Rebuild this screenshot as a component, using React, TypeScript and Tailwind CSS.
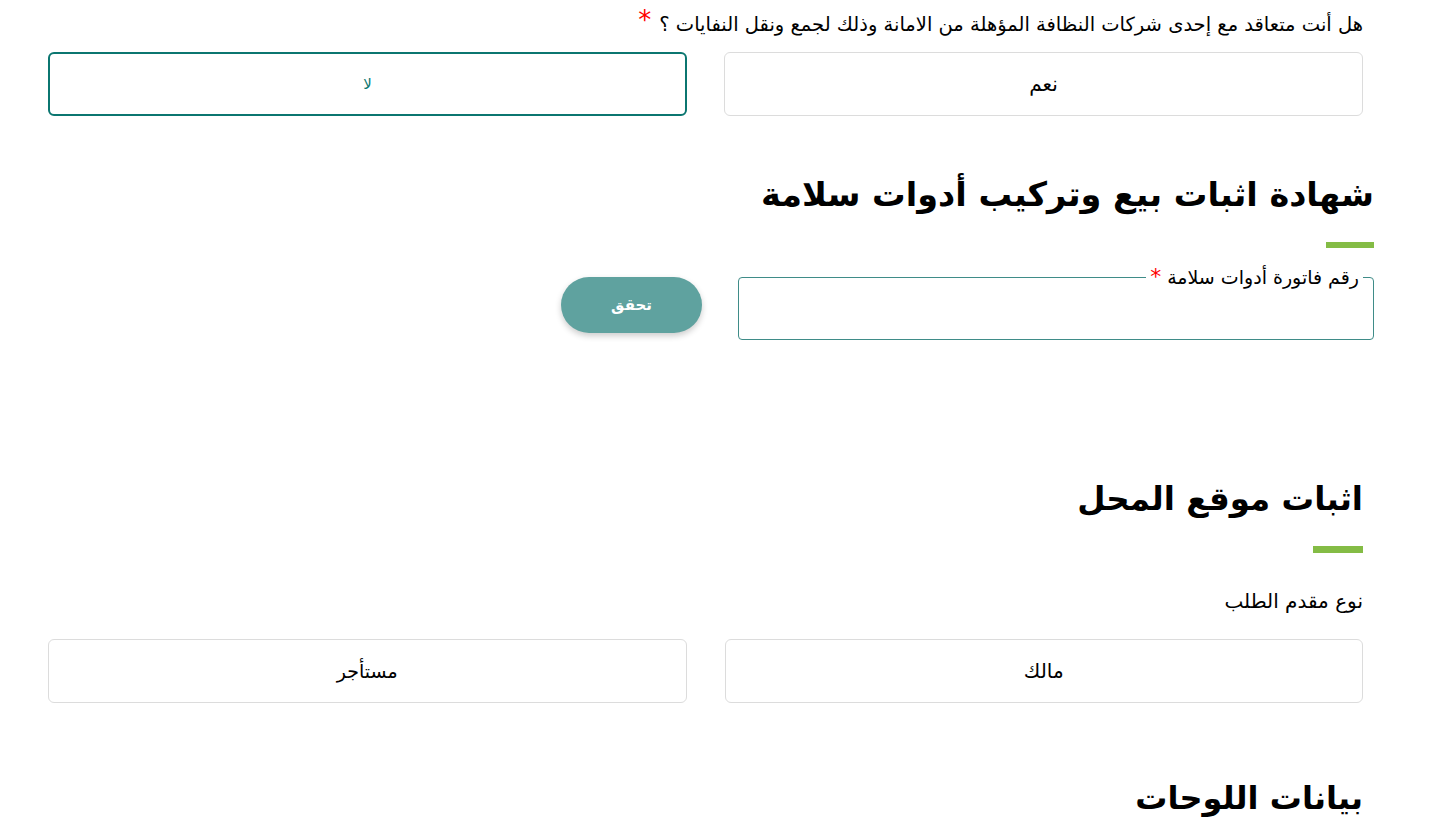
import React from "react";

export default function App() {
  return (
    <div
      dir="rtl"
      className="w-[1444px] h-[840px] overflow-hidden bg-white text-black"
      style={{ fontFamily: '"DejaVu Sans", "Noto Sans", sans-serif' }}
    >
      {/* Section 1 */}
      <div className="pr-[81px] pl-[48px] pt-[10px]">
        <div className="flex items-start gap-[8px] text-[19.5px] leading-[30px]">
          <span>هل أنت متعاقد مع إحدى شركات النظافة المؤهلة من الامانة وذلك لجمع ونقل النفايات ؟</span>
          <span className="text-[#ff0000] text-[26px] leading-[20px]">*</span>
        </div>
        <div className="grid grid-cols-2 gap-[37px] mt-[12px]">
          <button className="h-[64px] rounded-[6px] border border-[#dcdcdc] bg-white text-[20px]">نعم</button>
          <button className="h-[64px] rounded-[6px] border-2 border-[#0b7670] bg-white text-[15px] text-[#0b7670]">لا</button>
        </div>
      </div>

      {/* Section 2 */}
      <div className="pr-[70px] mt-[54px]">
        <h2 className="text-[33.5px] font-bold leading-[50px]">شهادة اثبات بيع وتركيب أدوات سلامة</h2>
        <div className="w-[48px] h-[6px] bg-[#84bc45] mt-[22px]" />
        <div className="flex items-start gap-[36px] mt-[29px]">
          <div className="relative w-[636px] h-[63px] rounded-[4px] border border-[#3f8c88]">
            <label className="absolute -top-[12px] right-[10px] bg-white px-[4px] text-[19px] leading-[22px] flex items-center gap-[6px]">
              <span>رقم فاتورة أدوات سلامة</span>
              <span className="text-[#ff0000] text-[22px] leading-[16px]">*</span>
            </label>
          </div>
          <button className="w-[141px] h-[56px] rounded-full bg-[#5fa29f] text-white font-bold text-[15px] shadow-[0_3px_6px_rgba(0,0,0,0.2)]">
            تحقق
          </button>
        </div>
      </div>

      {/* Section 3 */}
      <div className="pr-[81px] pl-[48px] mt-[134px]">
        <h2 className="text-[32.5px] font-bold leading-[50px]">اثبات موقع المحل</h2>
        <div className="w-[50px] h-[7px] bg-[#84bc45] mt-[22px]" />
        <div className="text-[20px] leading-[28px] mt-[34px]">نوع مقدم الطلب</div>
        <div className="grid grid-cols-2 gap-[38px] mt-[24px]">
          <button className="h-[64px] rounded-[6px] border border-[#dcdcdc] bg-white text-[20px]">مالك</button>
          <button className="h-[64px] rounded-[6px] border border-[#dcdcdc] bg-white text-[19px]">مستأجر</button>
        </div>
        <h2 className="text-[32px] font-bold leading-[50px] mt-[70px]">بيانات اللوحات</h2>
      </div>
    </div>
  );
}
